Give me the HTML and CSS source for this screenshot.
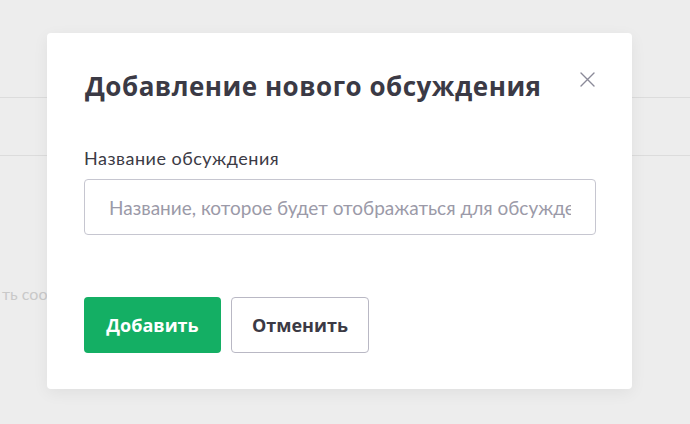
FILE: index.html
```html
<!DOCTYPE html>
<html lang="ru">
<head>
    <meta charset="UTF-8">
    <meta name="viewport" content="width=device-width, initial-scale=1.0">
    <title>Добавление нового обсуждения</title>
    <link rel="stylesheet" href="styles.css">
</head>
<body>
    <!-- page behind the overlay -->
    <div class="page">
        <div class="page-row page-row-top"></div>
        <div class="page-row page-row-mid"></div>
        <div class="page-hint">ть сообщение</div>
    </div>

    <!-- modal -->
    <div class="modal">
        <button class="modal-close" aria-label="Закрыть">
            <svg width="15" height="15" viewBox="0 0 15 15">
                <path d="M1 1 L14 14 M14 1 L1 14" stroke="#8b8a99" stroke-width="1.4" fill="none" stroke-linecap="round"/>
            </svg>
        </button>
        <h2 class="modal-title">Добавление нового обсуждения</h2>
        <label class="field-label" for="topic">Название обсуждения</label>
        <input type="text" id="topic" class="field-input" placeholder="Название, которое будет отображаться для обсуждения">
        <div class="modal-actions">
            <button class="btn btn-primary">Добавить</button>
            <button class="btn btn-secondary">Отменить</button>
        </div>
    </div>
</body>
</html>
```

FILE: styles.css
```css
body {
    margin: 0;
    padding: 0;
    height: 424px;
    overflow: hidden;
    background-color: #ededed;
    font-family: Lato, "Noto Sans", sans-serif;
    color: #3b3a45;
}
.page {
    display: flex;
    flex-direction: column;
}
.page-row {
    border-bottom: 1px solid #dcdcdc;
}
.page-row-top {
    height: 97px;
}
.page-row-mid {
    height: 57px;
}
.page-hint {
    margin-top: 128px;
    margin-left: 2px;
    font-size: 16px;
    color: #c9c9c9;
}
.modal {
    position: absolute;
    left: 47px;
    top: 33px;
    width: 585px;
    height: 356px;
    box-sizing: border-box;
    padding: 37px 36px 0 37px;
    background-color: #fff;
    border-radius: 4px;
    box-shadow: 0 4px 16px rgba(0, 0, 0, 0.06);
    display: flex;
    flex-direction: column;
    align-items: flex-start;
}
.modal-close {
    position: absolute;
    top: 39px;
    right: 37px;
    width: 15px;
    height: 15px;
    padding: 0;
    border: none;
    background: none;
    cursor: pointer;
}
.modal-close svg {
    display: block;
}
.modal-title {
    margin: 0 0 0 1px;
    font-family: "Open Sans", sans-serif;
    font-size: 26px;
    line-height: 32px;
    font-weight: 700;
    letter-spacing: 0.5px;
    color: #3b3a45;
}
.field-label {
    margin-top: 45px;
    font-size: 18px;
    line-height: 22px;
    font-weight: 400;
    letter-spacing: 0.5px;
}
.field-input {
    margin-top: 10px;
    width: 512px;
    height: 56px;
    box-sizing: border-box;
    padding: 0 24px;
    border: 1px solid #c6c6d0;
    border-radius: 4px;
    font-family: Lato, sans-serif;
    font-size: 19px;
    color: #3b3a45;
    outline: none;
}
.field-input::placeholder {
    color: #9b9aa8;
}
.modal-actions {
    display: flex;
    gap: 10px;
    margin-top: 62px;
}
.btn {
    height: 56px;
    box-sizing: border-box;
    padding: 0;
    border-radius: 4px;
    font-family: "Open Sans", sans-serif;
    font-size: 18px;
    font-weight: 700;
    cursor: pointer;
}
.btn-primary {
    width: 137px;
    border: none;
    background-color: #14af64;
    color: #fff;
}
.btn-secondary {
    width: 138px;
    border: 1px solid #b9b8c4;
    background-color: #fff;
    color: #3b3a45;
}
```
